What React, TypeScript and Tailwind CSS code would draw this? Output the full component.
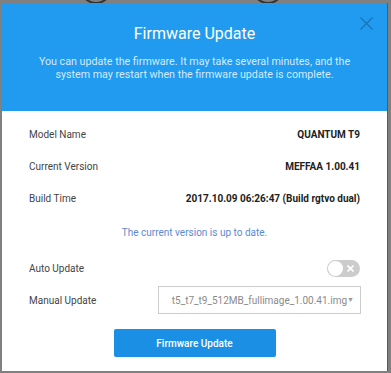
import React from "react";

export default function App() {
  return (
    <div
      className="relative w-[391px] h-[373px] bg-[#808080] pt-[3px] pl-[2px] overflow-hidden"
      style={{ fontFamily: "Roboto, 'Liberation Sans', sans-serif" }}
    >
      <div className="absolute left-[80px] top-[-28px] w-[32px] h-[32px] rounded-full border-2 border-[#333]" />
      <div className="absolute left-[252px] top-[-28px] w-[32px] h-[32px] rounded-full border-2 border-[#333]" />
      <div className="relative w-[386px] h-[368px] bg-white flex flex-col border-r border-[#5a5a5a]">
        <div className="h-[108px] bg-[#219bef] flex flex-col items-center pt-[21px] relative">
          <div className="text-[16px] text-white leading-[20px]">Firmware Update</div>
          <div className="mt-[11px] text-[10.7px] leading-[13px] text-[#d4eafb] text-center w-[330px]">
            You can update the firmware. It may take several minutes, and the system may restart when the firmware update is complete.
          </div>
          <svg className="absolute right-[14px] top-[14px]" width="13" height="13" viewBox="0 0 13 13">
            <path d="M0.5 0.5 L12.5 12.5 M12.5 0.5 L0.5 12.5" stroke="#1e6fae" strokeWidth="1.1" fill="none" />
          </svg>
        </div>
        <div className="px-[27px] pt-[7px] text-[10px]">
          <div className="flex justify-between items-center h-[32px]">
            <span className="text-[#444]">Model Name</span>
            <span className="font-bold text-[#222]">QUANTUM T9</span>
          </div>
          <div className="flex justify-between items-center h-[32px]">
            <span className="text-[#444]">Current Version</span>
            <span className="font-bold text-[#222]">MEFFAA 1.00.41</span>
          </div>
          <div className="flex justify-between items-center h-[32px]">
            <span className="text-[#444]">Build Time</span>
            <span className="font-bold text-[#222]">2017.10.09 06:26:47 (Build rgtvo dual)</span>
          </div>
          <div className="text-center text-[#5b8ad2] mt-[3px] h-[32px] leading-[32px]">
            The current version is up to date.
          </div>
          <div className="flex justify-between items-center h-[32px] mt-[3px]">
            <span className="text-[#444]">Auto Update</span>
            <div className="w-[33px] h-[17px] rounded-full bg-[#cccccc] flex items-center justify-between pl-[1px] pr-[6px]">
              <div className="w-[15px] h-[15px] rounded-full bg-white" />
              <svg width="7" height="7" viewBox="0 0 7 7">
                <path d="M0.5 0.5 L6.5 6.5 M6.5 0.5 L0.5 6.5" stroke="white" strokeWidth="1.6" />
              </svg>
            </div>
          </div>
          <div className="flex justify-between items-center h-[32px]">
            <span className="text-[#444]">Manual Update</span>
            <div className="w-[203px] h-[28px] -mr-[1px] border border-[#cccccc] flex items-center justify-end pr-[6px] text-[#8a8a8a]">
              <span>t5_t7_t9_512MB_fullimage_1.00.41.img</span>
              <span className="text-[7px] text-[#999]">▼</span>
            </div>
          </div>
          <div className="flex justify-center mt-[13px]">
            <button className="w-[162px] h-[28px] bg-[#1a8fe4] rounded-[2px] text-white text-[10px] font-medium">
              Firmware Update
            </button>
          </div>
        </div>
      </div>
    </div>
  );
}
